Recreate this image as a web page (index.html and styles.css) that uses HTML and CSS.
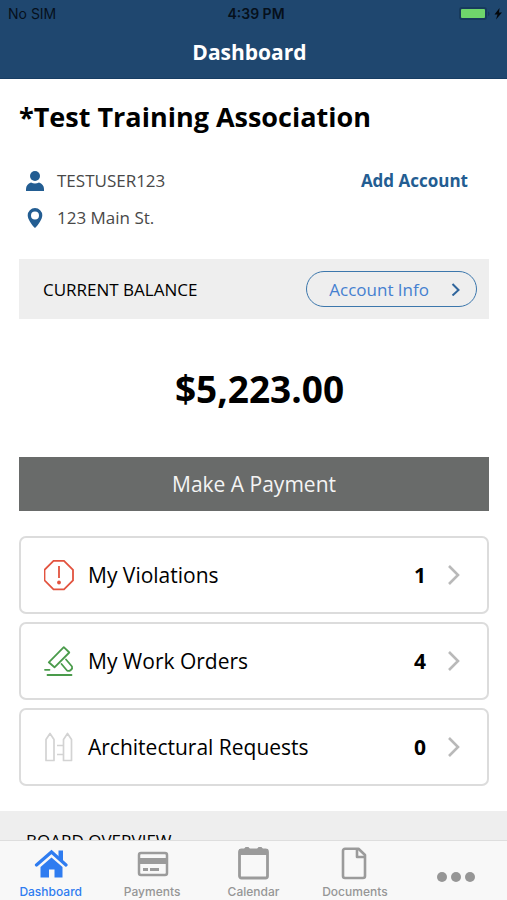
FILE: index.html
```html
<!DOCTYPE html>
<html lang="en">
<head>
<meta charset="utf-8">
<meta name="viewport" content="width=device-width, initial-scale=1">
<title>Dashboard</title>
<link rel="stylesheet" href="styles.css">
</head>
<body>
<header class="top">
  <div class="status">
    <span class="carrier">No SIM</span>
    <span class="clock">4:39 PM</span>
    <span class="power">
      <svg width="46" height="16" viewBox="0 0 46 16" aria-hidden="true">
        <rect x="1" y="1" width="28" height="13" rx="3" fill="#173a5c"/>
        <rect x="3" y="3" width="24" height="9" rx="1" fill="#6fd66b"/>
        <path d="M30 5.500c2 .5 2 4 0 4.500z" fill="#173a5c"/>
        <path d="M41.500 2L36.500 8.500h3L38 13.500 44 6.500h-3z" fill="#05080c"/>
      </svg>
    </span>
  </div>
  <h1 class="screen-title">Dashboard</h1>
</header>

<main class="content">
  <h2 class="association">*Test Training Association</h2>

  <section class="account">
    <div class="account-line">
      <svg width="18" height="20" viewBox="0 0 18 20" fill="#235d92" aria-hidden="true">
        <circle cx="9" cy="5" r="5"/>
        <path d="M0 20v-2c0-3 2-5.500 5-6.500 2.500 1.300 5.500 1.300 8 0 3 1 5 3.500 5 6.500v2z"/>
      </svg>
      <span>TESTUSER123</span>
      <a class="add" href="#add">Add Account</a>
    </div>
    <div class="account-line">
      <svg width="18" height="20" viewBox="0 0 18 20" fill="#235d92" fill-rule="evenodd" aria-hidden="true">
        <path d="M9 0a7.300 7.300 0 0 1 7.300 7.300C16.300 11 12.500 17 9 20 5.500 17 1.700 11 1.700 7.300A7.300 7.300 0 0 1 9 0zM9 3.400a4 4 0 1 0 0 8 4 4 0 0 0 0-8z"/>
      </svg>
      <span>123 Main St.</span>
    </div>
  </section>

  <section class="balance-bar">
    <span>CURRENT BALANCE</span>
    <button class="info" type="button">Account Info
      <svg width="10" height="14" viewBox="0 0 10 14" fill="none" stroke="#2f659c" stroke-width="2" aria-hidden="true"><path d="M1.500 2L7.500 8l-6 5.500"/></svg>
    </button>
  </section>
  <p class="amount">$5,223.00</p>
  <button class="pay" type="button">Make A Payment</button>

  <div class="cards">
    <a class="card" href="#violations">
      <svg width="32" height="32" viewBox="0 0 32 32" fill="none" stroke="#e2533f" stroke-width="1.800" aria-hidden="true">
        <path d="M9.500 1.800h10.500l9 9v10.500l-9 9H9.500l-9-9V10.800z"/>
        <path d="M15 7v12"/><circle cx="15" cy="23.500" r="1.900" fill="#e2533f" stroke="none"/>
      </svg>
      <span class="label">My Violations</span><span class="count">1</span>
      <svg width="14" height="22" viewBox="0 0 14 22" fill="none" stroke="#b9b9b9" stroke-width="2.600" aria-hidden="true"><path d="M2 2l9 9-9 9"/></svg>
    </a>
    <a class="card" href="#orders">
      <svg width="32" height="32" viewBox="0 0 32 32" fill="none" stroke="#4a9b4b" stroke-width="1.800" stroke-linejoin="round" stroke-linecap="round" aria-hidden="true">
        <path d="M4.800 17.300L19.800 2.200l5.500 5.300L10.500 22.300z"/>
        <path d="M17.500 19l5.500 6.500c2.500 1.500 6-1.500 5-4L22 14.500M3.500 30h24M1 24.800h4.500"/>
      </svg>
      <span class="label">My Work Orders</span><span class="count">4</span>
      <svg width="14" height="22" viewBox="0 0 14 22" fill="none" stroke="#b9b9b9" stroke-width="2.600" aria-hidden="true"><path d="M2 2l9 9-9 9"/></svg>
    </a>
    <a class="card" href="#requests">
      <svg width="32" height="32" viewBox="0 0 32 32" fill="none" stroke="#d3d3d3" stroke-width="1.700" stroke-linejoin="round" aria-hidden="true">
        <path d="M2 29.500V8.500L6 2.500l4 6v21zM19.500 29.500V8.500l4-6 4 6v21z"/>
        <path d="M13 14.500h6.500M13 23.500h6.500"/>
      </svg>
      <span class="label">Architectural Requests</span><span class="count">0</span>
      <svg width="14" height="22" viewBox="0 0 14 22" fill="none" stroke="#b9b9b9" stroke-width="2.600" aria-hidden="true"><path d="M2 2l9 9-9 9"/></svg>
    </a>
  </div>

  <h3 class="board">BOARD OVERVIEW</h3>
</main>

<nav class="tabs">
  <a class="tab active" href="#dashboard">
    <svg width="34" height="34" viewBox="0 0 34 34" aria-hidden="true">
      <path d="M2.500 18L17.500 5 32 18" fill="none" stroke="#2f7cf0" stroke-width="3.200" stroke-linecap="round"/>
      <path d="M24.500 3.500H29v11L24.500 10.500zM17.500 10.500l11 9.500v10.500h-8v-8h-5.500v8H6.500V20z" fill="#2f7cf0"/>
    </svg>
    <span>Dashboard</span>
  </a>
  <a class="tab" href="#payments">
    <svg width="34" height="34" viewBox="0 0 34 34" aria-hidden="true">
      <rect x="4" y="6" width="28" height="22" rx="2" fill="none" stroke="#9b9b9b" stroke-width="2.500"/>
      <path d="M4 11h28v6H4z" fill="#9b9b9b"/>
      <path d="M8 22.500h5M15 22.500h9" stroke="#9b9b9b" stroke-width="3"/>
    </svg>
    <span>Payments</span>
  </a>
  <a class="tab" href="#calendar">
    <svg width="34" height="34" viewBox="0 0 34 34" aria-hidden="true">
      <rect x="3.500" y="3" width="28" height="28" rx="2" fill="none" stroke="#9b9b9b" stroke-width="2.800"/>
      <path d="M3 2h29v6H3zM8 2l1.500-2h3L14 2zM21 2l1.500-2h3L27 2z" fill="#9b9b9b"/>
    </svg>
    <span>Calendar</span>
  </a>
  <a class="tab" href="#documents">
    <svg width="34" height="34" viewBox="0 0 34 34" fill="none" stroke="#9b9b9b" stroke-width="2.600" stroke-linejoin="round" aria-hidden="true">
      <path d="M20.500 1.800H7a2 2 0 0 0-2 2V29a2 2 0 0 0 2 2h18a2 2 0 0 0 2-2V8z"/>
      <path d="M19 2v8h8"/>
    </svg>
    <span>Documents</span>
  </a>
  <a class="tab more" href="#more" aria-label="More">
    <svg width="40" height="12" viewBox="0 0 40 12" fill="#969696" aria-hidden="true"><circle cx="6" cy="6" r="5"/><circle cx="20" cy="6" r="5"/><circle cx="34" cy="6" r="5"/></svg>
  </a>
</nav>
</body>
</html>
```
FILE: styles.css
```css
* { box-sizing: border-box; }
body {
  margin: 0;
  height: 100vh;
  display: flex;
  flex-direction: column;
  background: #fff;
  color: #000;
  font-family: "Open Sans", "Noto Sans", sans-serif;
}
h1, h2, h3, p { margin: 0; }
a { color: inherit; text-decoration: none; }
button { font-family: inherit; cursor: pointer; }
svg { display: block; flex: none; }

.top {
  flex: none;
  background: #1f476f;
  border-bottom: 1px solid #173d63;
}
.status {
  display: grid;
  grid-template-columns: 1fr auto 1fr;
  align-items: center;
  height: 28px;
  padding: 0 3px 0 8px;
  font: 14px/28px Inter, "Liberation Sans", sans-serif;
  color: #06101b;
}
.clock { font-weight: 600; }
.power { justify-self: end; }
.screen-title {
  height: 50px;
  line-height: 48px;
  font-size: 21px;
  font-weight: 700;
  color: #fff;
  text-align: center;
  padding-right: 8px;
}

.content {
  flex: 1;
  min-height: 0;
  overflow: hidden;
}
.association {
  padding: 18px 19px 0;
  font-size: 27px;
  line-height: 40px;
  font-weight: 700;
}
.account { padding: 25px 39px 23px 26px; }
.account-line {
  display: flex;
  align-items: center;
  gap: 13px;
  height: 37px;
  font-size: 17px;
  color: #484848;
}
.add {
  margin-left: auto;
  font-weight: 700;
  color: #235d92;
}
.balance-bar {
  display: flex;
  align-items: center;
  justify-content: space-between;
  height: 60px;
  margin: 0 18px 0 19px;
  padding: 0 12px 0 24px;
  background: #eee;
  font-size: 17px;
}
.info {
  display: flex;
  align-items: center;
  gap: 22px;
  height: 36px;
  padding: 0 15px 0 22px;
  border: 1px solid #3c77ac;
  border-radius: 18px;
  background: transparent;
  font-size: 17px;
  color: #4580d0;
}
.amount {
  padding: 40px 0 38px 12px;
  font-size: 37px;
  line-height: 60px;
  font-weight: 700;
  text-align: center;
}
.pay {
  display: block;
  width: calc(100% - 37px);
  height: 54px;
  margin: 0 18px 0 19px;
  border: 0;
  background: #696b6a;
  color: #f4f4f4;
  font-size: 21px;
}
.cards {
  display: grid;
  gap: 8px;
  padding: 25px 18px 25px 19px;
}
.card {
  display: flex;
  align-items: center;
  height: 78px;
  padding: 0 26px 0 23px;
  border: 2px solid #dcdcdc;
  border-radius: 7px;
  font-size: 21px;
}
.label { flex: 1; margin-left: 12px; }
.count {
  margin-right: 21px;
  font-weight: 700;
}
.board {
  padding: 16px 26px;
  background: #eee;
  font-size: 17px;
  line-height: 28px;
  font-weight: 400;
}

.tabs {
  flex: none;
  display: grid;
  grid-template-columns: repeat(5, 1fr);
  height: 60px;
  border-top: 1px solid #dedede;
  background: #f8f8f8;
  font: 500 12px/14px Inter, "Liberation Sans", sans-serif;
  color: #969696;
}
.tab {
  display: flex;
  flex-direction: column;
  align-items: center;
  gap: 4px;
  padding-top: 6px;
}
.active { color: #2f7cf0; }
.more { padding-top: 30px; }
```
